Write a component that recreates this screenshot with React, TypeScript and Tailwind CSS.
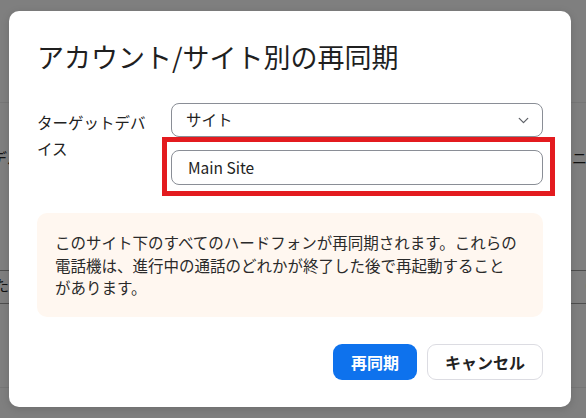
import React from "react"
import { ChevronDown } from "lucide-react"

export default function App() {
    return (
        <div className="relative h-[418px] w-[586px] overflow-hidden bg-white font-['Noto_Sans_CJK_JP',sans-serif] text-[#222]">
            {/* page behind the dialog */}
            <div className="flex flex-col">
                <div className="h-[103px] border-b border-[#ececec]" />
                <div className="flex h-[167px] items-start justify-between pt-[44px] text-[15px]">
                    <span className="ml-[-8px]">デバイス</span>
                    <span className="mr-[-16px]">ニア</span>
                </div>
                <div className="h-[34px] border-y border-[#9c9c9c]" />
                <div className="flex h-[84px] items-start justify-between border-b border-[#ececec] text-[15px]">
                    <span className="ml-[-6px] mt-[-30px]">た</span>
                    <span className="mr-[-4px] mt-[-30px]">(</span>
                </div>
            </div>

            {/* overlay */}
            <div className="absolute inset-0 flex items-start bg-black/50 pl-[9px] pt-[11px]">
                <div className="w-[562px] rounded-[10px] bg-white px-[28px] pb-[27px] pt-[28px] shadow-[0_2px_8px_rgba(0,0,0,0.15)]">
                    <h2 className="text-[27px] leading-[36px] font-normal text-[#1f1f1f]">
                        アカウント/サイト別の再同期
                    </h2>

                    <div className="mt-[28px] flex gap-[18px]">
                        <div className="mt-[6px] w-[116px] text-[15.5px] leading-[26px] text-[#222]">ターゲットデバイス</div>
                        <div className="flex flex-1 flex-col gap-[13px]">
                            <div className="flex h-[34px] items-center justify-between rounded-[8px] border border-[#8a8e96] pl-[14px] pr-[10px] text-[15.5px]">
                                <span>サイト</span>
                                <ChevronDown className="h-[17px] w-[17px] text-[#5f6268]" strokeWidth={1.8} />
                            </div>
                            <div className="relative">
                                <div className="flex h-[35px] items-center rounded-[8px] border border-[#8a8e96] pl-[16px] text-[15.5px]">
                                    Main Site
                                </div>
                                <div className="pointer-events-none absolute bottom-[-11px] left-[-9px] right-[-12px] top-[-13px] border-[5px] border-[#e31b1f]" />
                            </div>
                        </div>
                    </div>

                    <div className="mt-[28px] rounded-[10px] bg-[#fff7f0] px-[18px] py-[18px] text-[15.5px] leading-[22.5px] text-[#2a2a2a]">
                        このサイト下のすべてのハードフォンが再同期されます。これらの
                        <br />
                        電話機は、進行中の通話のどれかが終了した後で再起動すること
                        <br />
                        があります。
                    </div>

                    <div className="mt-[27px] flex justify-end gap-[10px]">
                        <button className="h-[36px] w-[84px] rounded-[9px] bg-[#0e72ed] text-[16px] font-bold text-white">
                            再同期
                        </button>
                        <button className="h-[36px] w-[116px] rounded-[9px] border border-[#dcdce2] bg-white text-[16px] font-semibold text-[#222]">
                            キャンセル
                        </button>
                    </div>
                </div>
            </div>
        </div>
    )
}
